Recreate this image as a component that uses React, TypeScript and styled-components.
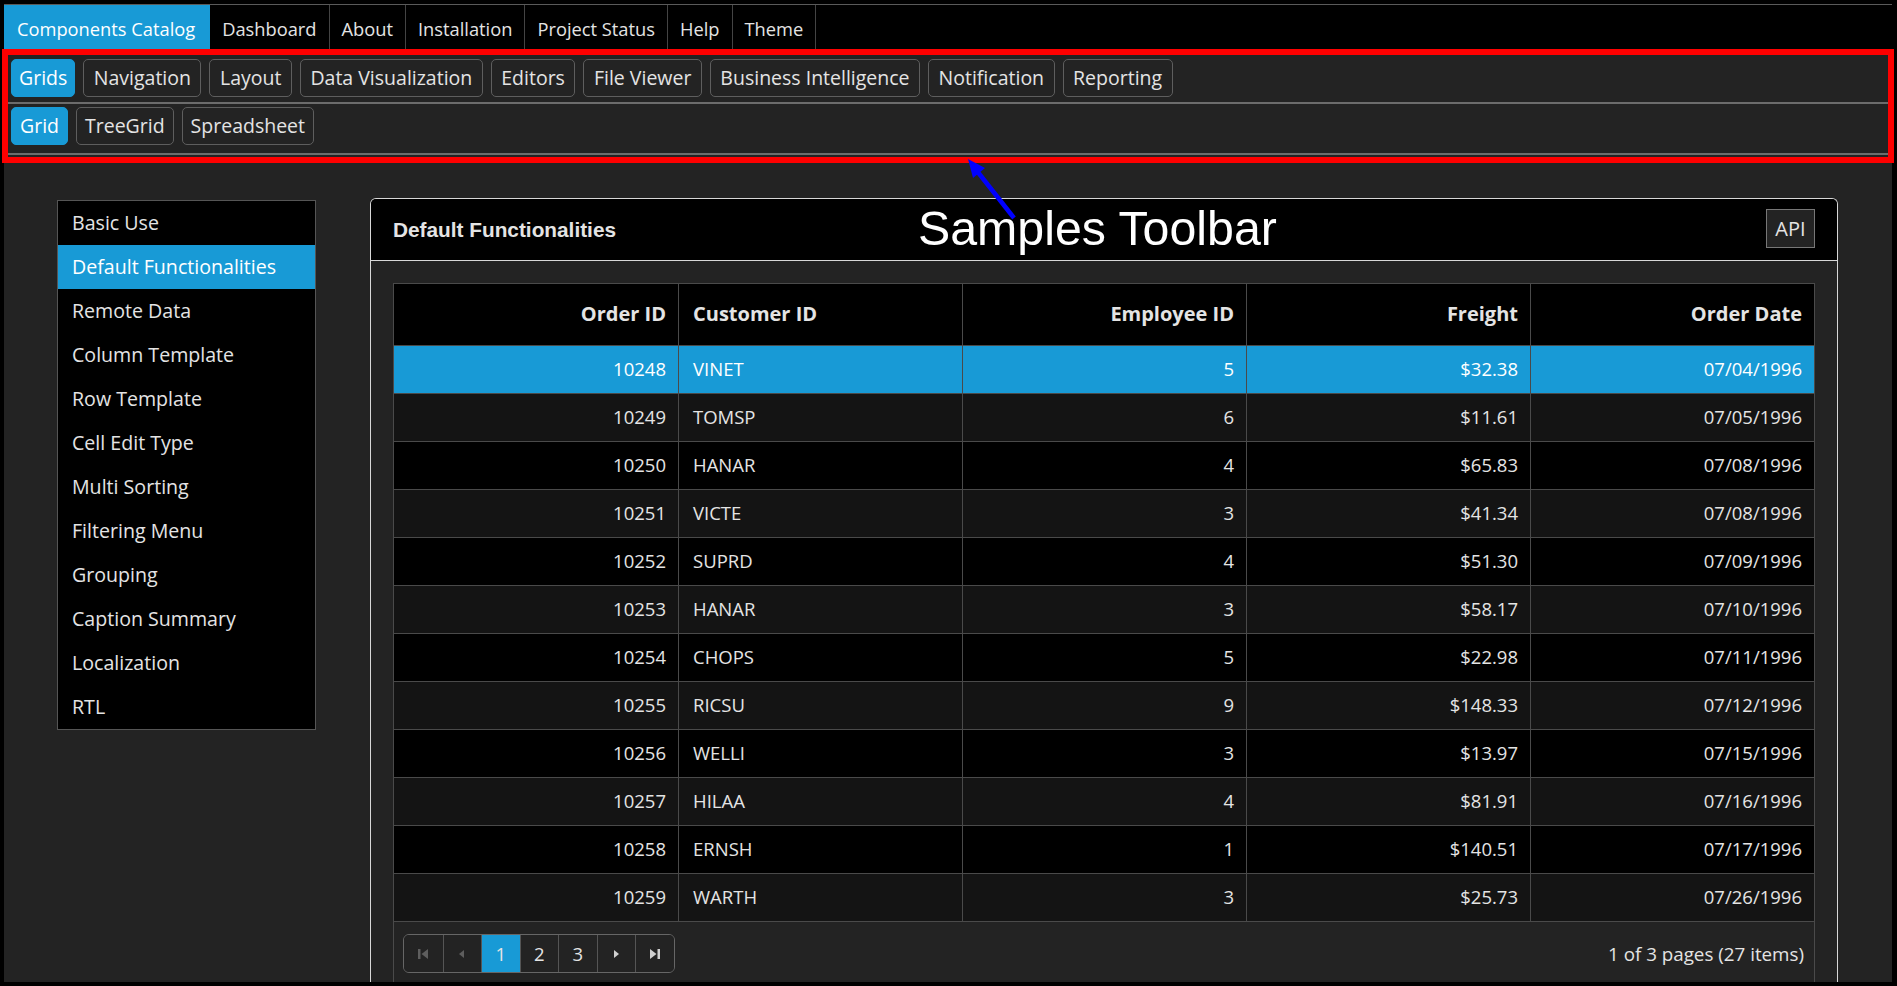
import React from "react";
import styled, { createGlobalStyle, css } from "styled-components";

const BLUE = "#189ad6";
const TEXT = "#e4e4e4";
const LINE = "#4a4a4a";
const FONT = `"Open Sans", "Noto Sans", sans-serif`;

const GlobalStyle = createGlobalStyle`
  html, body { margin: 0; padding: 0; background: #000; }
  body { font-family: ${FONT}; color: ${TEXT}; }
  * { box-sizing: border-box; }
`;

const Page = styled.div`
  position: relative;
  width: 1897px;
  height: 986px;
  padding: 4px 5px 4px 4px;
  background: #000;
  overflow: hidden;
`;

const Frame = styled.div`
  height: 978px;
  overflow: hidden;
  background: #232323;
  display: flex;
  flex-direction: column;
`;

const TopNav = styled.nav`
  display: flex;
  height: 48px;
  flex-shrink: 0;
  border-top: 1px solid #5a5a5a;
  background: #000;
`;

const NavItem = styled.div<{ $active?: boolean }>`
  display: flex;
  align-items: center;
  padding: 0 12px 1px 12px;
  font-size: 18.3px;
  color: ${TEXT};
  border-right: 1px solid #444;
  ${(p) =>
    p.$active &&
    css`
      padding: 0 14px 1px 13px;
      background: ${BLUE};
      color: #fff;
      border-right-color: ${BLUE};
    `}
`;

const ToolbarRow = styled.div<{ $pt: number; $pb: number }>`
  display: flex;
  gap: 8px;
  flex-shrink: 0;
  padding: ${(p) => p.$pt}px 7px ${(p) => p.$pb}px 7px;
  background: #232323;
  border-bottom: 2px solid #6c6c6c;
`;

const ToolButton = styled.div<{ $active?: boolean; $pad: number }>`
  height: 38px;
  display: flex;
  align-items: center;
  padding: 0 ${(p) => p.$pad}px 2px;
  font-size: 19.5px;
  border: 1px solid #5e5e5e;
  border-radius: 5px;
  background: #232323;
  color: ${TEXT};
  ${(p) =>
    p.$active &&
    css`
      background: ${BLUE};
      border-color: ${BLUE};
      color: #fff;
    `}
`;

const Content = styled.div`
  flex: 1;
  display: flex;
  align-items: flex-start;
  gap: 54px;
  padding: 43px 54px 0 53px;
  min-height: 0;
`;

const Sidebar = styled.ul`
  list-style: none;
  margin: 2px 0 0;
  padding: 0;
  width: 259px;
  flex-shrink: 0;
  background: #000;
  border: 1px solid #555;
`;

const SideItem = styled.li<{ $active?: boolean }>`
  height: 44px;
  display: flex;
  align-items: center;
  padding: 0 0 2px 14px;
  font-size: 19.6px;
  color: ${TEXT};
  ${(p) =>
    p.$active &&
    css`
      background: ${BLUE};
      color: #fff;
    `}
`;

const Panel = styled.section`
  flex: 1;
  align-self: stretch;
  border: 1px solid #d8d8d8;
  border-bottom: none;
  border-radius: 6px 6px 0 0;
  background: #232323;
  display: flex;
  flex-direction: column;
  overflow: hidden;
`;

const PanelHeader = styled.header`
  height: 62px;
  flex-shrink: 0;
  display: flex;
  align-items: center;
  justify-content: space-between;
  padding: 0 22px 0 22px;
  background: #000;
  border-bottom: 1px solid #d8d8d8;
`;

const PanelTitle = styled.h2`
  margin: 0;
  font-family: "Liberation Sans", Arial, sans-serif;
  font-weight: bold;
  font-size: 20.8px;
  color: ${TEXT};
`;

const ApiButton = styled.div`
  width: 49px;
  height: 39px;
  margin-bottom: 3px;
  display: flex;
  align-items: center;
  justify-content: center;
  font-size: 20px;
  color: ${TEXT};
  background: #232323;
  border: 1px solid #777;
`;

const PanelBody = styled.div`
  padding: 22px 22px 0 22px;
`;

const Grid = styled.div`
  border: 1px solid ${LINE};
  border-bottom: none;
  background: #232323;
`;

const GridRow = styled.div<{ $kind: "head" | "sel" | "odd" | "even" }>`
  display: grid;
  grid-template-columns: repeat(5, 1fr);
  height: ${(p) => (p.$kind === "head" ? 61 : 48)}px;
  border-top: ${(p) => (p.$kind === "head" ? "none" : `1px solid ${LINE}`)};
  background: ${(p) =>
    p.$kind === "sel" ? BLUE : p.$kind === "odd" ? "#141414" : "#000"};
  color: ${(p) => (p.$kind === "sel" ? "#fff" : TEXT)};
  font-weight: ${(p) => (p.$kind === "head" ? 700 : 400)};
  font-size: ${(p) => (p.$kind === "head" ? 20 : 18.5)}px;
`;

const Cell = styled.div<{ $left?: boolean }>`
  display: flex;
  align-items: center;
  justify-content: ${(p) => (p.$left ? "flex-start" : "flex-end")};
  padding: 0 12px 2px 14px;
  & + & {
    border-left: 1px solid ${LINE};
  }
`;

const PagerBar = styled.div`
  display: flex;
  align-items: center;
  justify-content: space-between;
  height: 64px;
  padding: 0 10px 0 9px;
  border-top: 1px solid ${LINE};
`;

const Pager = styled.div`
  display: flex;
  border: 1px solid #666;
  border-radius: 6px;
  overflow: hidden;
`;

const PageCell = styled.div<{ $active?: boolean }>`
  width: 38.5px;
  height: 37px;
  display: flex;
  align-items: center;
  justify-content: center;
  font-size: 18.5px;
  color: ${TEXT};
  background: ${(p) => (p.$active ? BLUE : "#232323")};
  & + & {
    border-left: 1px solid #555;
  }
`;

const PageInfo = styled.div`
  font-size: 18.8px;
  color: ${TEXT};
`;

const RedBox = styled.div`
  position: absolute;
  left: 2px;
  top: 49px;
  width: 1892px;
  height: 114px;
  border: 6px solid #ff0000;
  pointer-events: none;
`;

const AnnotationLabel = styled.div`
  position: absolute;
  left: 918px;
  top: 204px;
  font-family: "Liberation Sans", Arial, sans-serif;
  font-size: 48.3px;
  line-height: 1;
  color: #fff;
  white-space: nowrap;
`;

const ArrowSvg = styled.svg`
  position: absolute;
  left: 955px;
  top: 150px;
  overflow: visible;
`;

const navItems = ["Components Catalog", "Dashboard", "About", "Installation", "Project Status", "Help", "Theme"];
const cats = ["Grids", "Navigation", "Layout", "Data Visualization", "Editors", "File Viewer", "Business Intelligence", "Notification", "Reporting"];
const subs = ["Grid", "TreeGrid", "Spreadsheet"];
const samples = ["Basic Use", "Default Functionalities", "Remote Data", "Column Template", "Row Template", "Cell Edit Type", "Multi Sorting", "Filtering Menu", "Grouping", "Caption Summary", "Localization", "RTL"];

const rows: [number, string, number, string, string][] = [
  [10248, "VINET", 5, "$32.38", "07/04/1996"],
  [10249, "TOMSP", 6, "$11.61", "07/05/1996"],
  [10250, "HANAR", 4, "$65.83", "07/08/1996"],
  [10251, "VICTE", 3, "$41.34", "07/08/1996"],
  [10252, "SUPRD", 4, "$51.30", "07/09/1996"],
  [10253, "HANAR", 3, "$58.17", "07/10/1996"],
  [10254, "CHOPS", 5, "$22.98", "07/11/1996"],
  [10255, "RICSU", 9, "$148.33", "07/12/1996"],
  [10256, "WELLI", 3, "$13.97", "07/15/1996"],
  [10257, "HILAA", 4, "$81.91", "07/16/1996"],
  [10258, "ERNSH", 1, "$140.51", "07/17/1996"],
  [10259, "WARTH", 3, "$25.73", "07/26/1996"],
];

const PagerIcon = ({ kind, dim }: { kind: "first" | "prev" | "next" | "last"; dim?: boolean }) => {
  const c = dim ? "#5e5e5e" : "#d0d0d0";
  return (
    <svg width="16" height="16" viewBox="0 0 16 16">
      {kind === "first" && (
        <>
          <rect x="3" y="3" width="2.5" height="10" fill={c} />
          <polygon points="13,3 13,13 6.5,8" fill={c} />
        </>
      )}
      {kind === "prev" && <polygon points="10,4 10,12 5,8" fill={c} />}
      {kind === "next" && <polygon points="6,4 6,12 11,8" fill={c} />}
      {kind === "last" && (
        <>
          <polygon points="3,3 3,13 9.5,8" fill={c} />
          <rect x="10.5" y="3" width="2.5" height="10" fill={c} />
        </>
      )}
    </svg>
  );
};

export default function App() {
  return (
    <>
      <GlobalStyle />
      <Page>
        <Frame>
          <TopNav>
            {navItems.map((n, i) => (
              <NavItem key={n} $active={i === 0}>
                {n}
              </NavItem>
            ))}
          </TopNav>
          <ToolbarRow $pt={7} $pb={5}>
            {cats.map((c, i) => (
              <ToolButton key={c} $active={i === 0} $pad={i === 0 ? 7 : 9.5}>
                {c}
              </ToolButton>
            ))}
          </ToolbarRow>
          <ToolbarRow $pt={3} $pb={8}>
            {subs.map((c, i) => (
              <ToolButton key={c} $active={i === 0} $pad={8}>
                {c}
              </ToolButton>
            ))}
          </ToolbarRow>
          <Content>
            <Sidebar>
              {samples.map((s, i) => (
                <SideItem key={s} $active={i === 1}>
                  {s}
                </SideItem>
              ))}
            </Sidebar>
            <Panel>
              <PanelHeader>
                <PanelTitle>Default Functionalities</PanelTitle>
                <ApiButton>API</ApiButton>
              </PanelHeader>
              <PanelBody>
                <Grid>
                  <GridRow $kind="head">
                    <Cell>Order ID</Cell>
                    <Cell $left>Customer ID</Cell>
                    <Cell>Employee ID</Cell>
                    <Cell>Freight</Cell>
                    <Cell>Order Date</Cell>
                  </GridRow>
                  {rows.map((r, i) => (
                    <GridRow key={r[0]} $kind={i === 0 ? "sel" : i % 2 === 1 ? "odd" : "even"}>
                      <Cell>{r[0]}</Cell>
                      <Cell $left>{r[1]}</Cell>
                      <Cell>{r[2]}</Cell>
                      <Cell>{r[3]}</Cell>
                      <Cell>{r[4]}</Cell>
                    </GridRow>
                  ))}
                  <PagerBar>
                    <Pager>
                      <PageCell>
                        <PagerIcon kind="first" dim />
                      </PageCell>
                      <PageCell>
                        <PagerIcon kind="prev" dim />
                      </PageCell>
                      <PageCell $active>1</PageCell>
                      <PageCell>2</PageCell>
                      <PageCell>3</PageCell>
                      <PageCell>
                        <PagerIcon kind="next" />
                      </PageCell>
                      <PageCell>
                        <PagerIcon kind="last" />
                      </PageCell>
                    </Pager>
                    <PageInfo>1 of 3 pages (27 items)</PageInfo>
                  </PagerBar>
                </Grid>
              </PanelBody>
            </Panel>
          </Content>
        </Frame>
        <RedBox />
        <AnnotationLabel>Samples Toolbar</AnnotationLabel>
        <ArrowSvg width="70" height="80" viewBox="0 0 70 80">
          <line x1="59" y1="68" x2="22" y2="21" stroke="#0000ff" strokeWidth="4.5" />
          <polygon points="13,9 30,18 18,28" fill="#0000ff" />
        </ArrowSvg>
      </Page>
    </>
  );
}
